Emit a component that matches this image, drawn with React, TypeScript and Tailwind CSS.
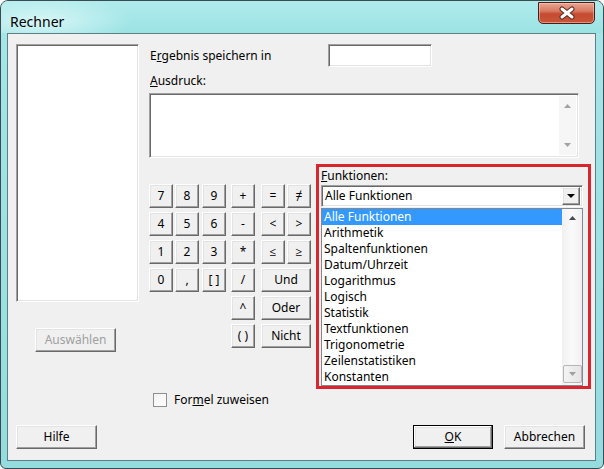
import React from 'react';

const raised =
  'bg-[#f0f0f0] border border-t-white border-l-white border-r-[#696969] border-b-[#696969] shadow-[inset_-1px_-1px_0_#a0a0a0,inset_1px_1px_0_#e3e3e3]';
const sunken =
  'bg-white border border-t-[#a0a0a0] border-l-[#a0a0a0] border-r-white border-b-white shadow-[inset_1px_1px_0_#696969,inset_-1px_-1px_0_#e3e3e3]';

const funktionen = [
  'Alle Funktionen',
  'Arithmetik',
  'Spaltenfunktionen',
  'Datum/Uhrzeit',
  'Logarithmus',
  'Logisch',
  'Statistik',
  'Textfunktionen',
  'Trigonometrie',
  'Zeilenstatistiken',
  'Konstanten',
];

function Key({ label, className = '' }: { label: string; className?: string }) {
  return (
    <button className={`h-[24px] w-[24px] flex items-center justify-center leading-none ${raised} ${className}`}>
      {label}
    </button>
  );
}

function Tri({ dir, color }: { dir: 'up' | 'down'; color: string }) {
  return (
    <svg width="7" height="4" viewBox="0 0 7 4">
      {dir === 'up' ? <polygon points="0,4 3.5,0 7,4" fill={color} /> : <polygon points="0,0 7,0 3.5,4" fill={color} />}
    </svg>
  );
}

export default function App() {
  return (
    <div className="w-[604px] h-[469px] bg-white font-['Noto_Sans','Open_Sans',sans-serif] text-[12px] text-black">
      <div className="w-full h-full flex flex-col rounded-t-[8px] rounded-b-[6px] border border-[#3a4c51] bg-[linear-gradient(to_bottom,#a6e6e8,#95dcde)] pl-[6px] pr-[7px]">
        {/* title bar */}
        <div className="h-[32px] -ml-[6px] -mr-[7px] flex items-start rounded-t-[7px] bg-[radial-gradient(ellipse_90px_26px_at_40px_20px,#d8f6f6_0%,rgba(216,246,246,0)_100%),linear-gradient(to_bottom,#b0ebec,#9ce3e4)]">
          <span className="pl-[9px] pt-[11px] text-[14px] leading-[19px] text-black">Rechner</span>
          <div className="ml-auto mr-[8px] mt-[1px] w-[57px] h-[22px] rounded-b-[5px] border border-[#4a1e16] bg-[linear-gradient(to_bottom,#e9a592_0%,#d97a63_40%,#c54a30_55%,#c9563a_100%)] shadow-[inset_0_0_0_1px_rgba(255,210,200,0.5)] flex items-center justify-center">
            <svg width="22" height="14" viewBox="0 0 22 14">
              <path d="M6 3 L16 11 M16 3 L6 11" stroke="#5a2a22" strokeWidth="5" strokeLinecap="round" />
              <path d="M6 3 L16 11 M16 3 L6 11" stroke="#ffffff" strokeWidth="3" strokeLinecap="round" />
            </svg>
          </div>
        </div>

        {/* client */}
        <div className="h-[428px] border border-[#5b8187] bg-[#f0f0f0] flex flex-col">
          <div className="flex items-start pl-[8px] pt-[10px]">
            {/* left column */}
            <div className="w-[123px] flex flex-col">
              <div className={`h-[258px] ${sunken}`} />
              <button className={`mt-[26px] ml-[19px] w-[81px] h-[24px] text-[#a0a0a0] ${raised}`}>Auswählen</button>
            </div>

            {/* right column */}
            <div className="ml-[10px] flex flex-col">
              <div className="flex items-center h-[23px]">
                <span className="ml-[1px] w-[178px]">
                  E<span className="underline">r</span>gebnis speichern in
                </span>
                <div className={`w-[104px] h-[23px] ${sunken}`} />
              </div>
              <div className="mt-[6px] h-[16px] leading-[16px] pl-[1px]">
                <span className="underline">A</span>usdruck:
              </div>
              <div className={`mt-[4px] w-[430px] h-[65px] flex justify-end p-[2px] ${sunken}`}>
                <div className="w-[17px] h-full bg-[#f6f6f6] flex flex-col items-center justify-between py-[8px]">
                  <Tri dir="up" color="#a3a3a3" />
                  <Tri dir="down" color="#a3a3a3" />
                </div>
              </div>

              <div className="mt-[6px] flex items-start">
                {/* keypad */}
                <div className="mt-[20px] flex flex-col gap-[4px] w-[162px]">
                  <div className="flex">
                    <Key label="7" />
                    <Key label="8" className="ml-[2px]" />
                    <Key label="9" className="ml-[3px]" />
                    <Key label="+" className="ml-[5px]" />
                    <Key label="=" className="ml-[6px]" />
                    <Key label="≠" className="ml-[2px]" />
                  </div>
                  <div className="flex">
                    <Key label="4" />
                    <Key label="5" className="ml-[2px]" />
                    <Key label="6" className="ml-[3px]" />
                    <Key label="-" className="ml-[5px]" />
                    <Key label="<" className="ml-[6px]" />
                    <Key label=">" className="ml-[2px]" />
                  </div>
                  <div className="flex">
                    <Key label="1" />
                    <Key label="2" className="ml-[2px]" />
                    <Key label="3" className="ml-[3px]" />
                    <Key label="*" className="ml-[5px]" />
                    <Key label="≤" className="ml-[6px]" />
                    <Key label="≥" className="ml-[2px]" />
                  </div>
                  <div className="flex">
                    <Key label="0" />
                    <Key label="," className="ml-[2px]" />
                    <Key label="[ ]" className="ml-[3px]" />
                    <Key label="/" className="ml-[5px]" />
                    <Key label="Und" className="ml-[6px] !w-[50px]" />
                  </div>
                  <div className="flex">
                    <Key label="^" className="ml-[82px]" />
                    <Key label="Oder" className="ml-[6px] !w-[50px]" />
                  </div>
                  <div className="flex">
                    <Key label="( )" className="ml-[82px]" />
                    <Key label="Nicht" className="ml-[6px] !w-[50px]" />
                  </div>
                </div>

                {/* Funktionen box */}
                <div className="ml-[5px] w-[275px] h-[225px] border-[3px] border-[#d9262e] pl-[2px] pr-[5px] flex flex-col">
                  <div className="mt-[1px] h-[16px] leading-[16px]">
                    <span className="underline">F</span>unktionen:
                  </div>
                  <div className={`mt-[1px] h-[22px] flex items-center p-[2px] ${sunken}`}>
                    <span className="flex-1 pl-[1px] leading-[18px]">Alle Funktionen</span>
                    <div className={`w-[18px] h-[18px] flex items-center justify-center ${raised}`}>
                      <svg width="8" height="4" viewBox="0 0 8 4">
                        <polygon points="0,0 8,0 4,4" fill="#000" />
                      </svg>
                    </div>
                  </div>
                  <div className="mt-[1px] h-[178px] border border-[#828790] bg-white flex">
                    <div className="flex-1 flex flex-col">
                      {funktionen.map((f, i) => (
                        <div
                          key={f}
                          className={`h-[16px] leading-[16px] pl-[2px] whitespace-nowrap ${i === 0 ? 'bg-[#3399ff] text-white' : ''}`}
                        >
                          {f}
                        </div>
                      ))}
                    </div>
                    <div className="w-[20px] bg-[linear-gradient(to_right,#f0f0f0,#fafafa,#f0f0f0)] flex flex-col items-center justify-between">
                      <div className="h-[18px] flex items-center justify-center">
                        <Tri dir="up" color="#4a4a4a" />
                      </div>
                      <div className="w-[19px] h-[18px] mb-[2px] rounded-[2px] border border-[#b5b5b5] bg-[linear-gradient(to_right,#f4f4f4,#e4e4e4)] flex items-center justify-center">
                        <Tri dir="down" color="#a0a0a0" />
                      </div>
                    </div>
                  </div>
                </div>
              </div>

              <div className="mt-[4px] flex items-center h-[14px]">
                <div className="ml-[4px] w-[14px] h-[14px] border border-[#8e8f8f] bg-[linear-gradient(135deg,#f2f2f2,#ffffff)]" />
                <span className="ml-[7px]">
                  For<span className="underline">m</span>el zuweisen
                </span>
              </div>
            </div>
          </div>

          {/* bottom buttons */}
          <div className="mt-auto mb-[11px] flex items-center h-[24px]">
            <button className={`ml-[8px] w-[81px] h-[24px] ${raised}`}>Hilfe</button>
            <button className="ml-auto w-[80px] h-[24px] bg-[#f0f0f0] border border-black shadow-[inset_-1px_-1px_0_#696969,inset_1px_1px_0_#ffffff,inset_-2px_-2px_0_#a0a0a0,inset_2px_2px_0_#e3e3e3]">
              <span className="underline">O</span>K
            </button>
            <button className={`ml-[11px] mr-[10px] w-[81px] h-[24px] ${raised}`}>Abbrechen</button>
          </div>
        </div>
      </div>
    </div>
  );
}
